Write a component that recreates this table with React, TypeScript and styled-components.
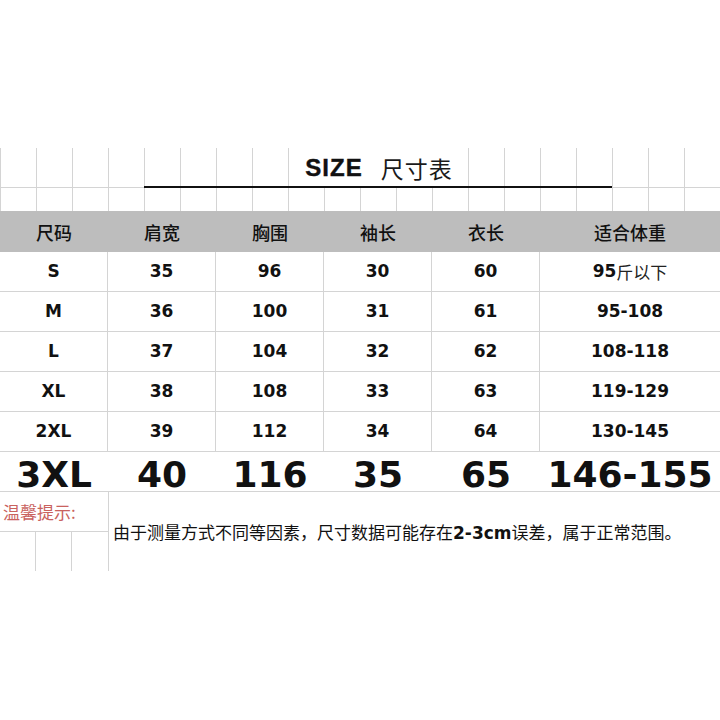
import React from "react";
import styled, { createGlobalStyle } from "styled-components";

const GlobalStyle = createGlobalStyle`
  html, body {
    margin: 0;
    padding: 0;
    background: #ffffff;
  }
  body {
    font-family: "Noto Sans CJK SC", "DejaVu Sans", sans-serif;
  }
`;

const LINE = "#d4d4d4";

const Page = styled.div`
  width: 720px;
  height: 720px;
  overflow: hidden;
  background: #fff;
  padding-top: 148px;
  box-sizing: border-box;
`;

const GridArea = styled.div`
  background-image: linear-gradient(to right, ${LINE} 1px, transparent 1px);
  background-size: 36px 100%;
  background-position: 0 0;
`;

const TitleRow = styled.div`
  display: grid;
  grid-template-columns: repeat(20, 36px);
  height: 40px;
  border-bottom: 1px solid ${LINE};
  box-sizing: border-box;
`;

const TitlePatch = styled.div`
  grid-column: 9 / 14;
  margin-left: 2px;
  background: #fff;
  display: flex;
  align-items: center;
  justify-content: center;
  gap: 18px;
  padding-left: 0;
`;

const SizeWord = styled.span`
  font-family: "Liberation Sans", Arial, sans-serif;
  font-weight: 700;
  font-size: 24px;
  letter-spacing: 1px;
  color: #111;
  -webkit-text-stroke: 0.4px #111;
`;

const TitleCn = styled.span`
  font-family: "Noto Sans CJK SC", sans-serif;
  font-size: 23px;
  font-weight: 400;
  color: #1a1a1a;
  letter-spacing: 1px;
`;

const SubRow = styled.div`
  display: grid;
  grid-template-columns: repeat(20, 36px);
  height: 23px;
`;

const Underline = styled.div`
  grid-column: 5 / 18;
  height: 2px;
  margin-top: -2px;
  background: #111;
`;

const Table = styled.div`
  display: flex;
  flex-direction: column;
`;

const Row = styled.div<{ $head?: boolean; $big?: boolean }>`
  display: grid;
  grid-template-columns: repeat(5, 108px) 1fr;
  height: ${(p) => (p.$head ? 41 : 40)}px;
  background: ${(p) => (p.$head ? "#bdbdbd" : "#fff")};
  border-bottom: ${(p) => (p.$head ? "none" : `1px solid ${LINE}`)};
  box-sizing: border-box;
`;

const Cell = styled.div<{ $head?: boolean; $big?: boolean; $last?: boolean }>`
  display: flex;
  align-items: center;
  justify-content: center;
  border-right: ${(p) =>
    p.$head || p.$big || p.$last ? "none" : `1px solid ${LINE}`};
  color: #111;
  font-family: ${(p) =>
    p.$head
      ? `"Noto Sans CJK SC", sans-serif`
      : `"DejaVu Sans", Verdana, sans-serif`};
  font-weight: ${(p) => (p.$head ? 500 : 700)};
  font-size: ${(p) => (p.$head ? 18 : p.$big ? 36 : 17)}px;
  line-height: 1;
  padding-top: ${(p) => (p.$big ? 5 : 0)}px;
  white-space: nowrap;
`;

const Unit = styled.span`
  font-family: "Noto Sans CJK SC", sans-serif;
  font-weight: 400;
  font-size: 17px;
  color: #222;
`;

const TipArea = styled.div`
  display: flex;
`;

const TipLeft = styled.div`
  width: 108px;
  border-right: 1px solid ${LINE};
  display: flex;
  flex-direction: column;
`;

const TipLabel = styled.div`
  height: 39px;
  border-bottom: 1px solid ${LINE};
  display: flex;
  align-items: center;
  padding-left: 3px;
  font-family: "Noto Sans CJK SC", sans-serif;
  font-size: 17px;
  color: #c9625e;
`;

const TipCells = styled.div`
  display: grid;
  grid-template-columns: repeat(3, 36px);
  height: 39px;
`;

const TipCell = styled.div<{ $last?: boolean }>`
  border-right: ${(p) => (p.$last ? "none" : `1px solid ${LINE}`)};
`;

const Note = styled.div`
  padding: 29px 0 0 4px;
  font-family: "Noto Sans CJK SC", sans-serif;
  font-size: 17px;
  color: #111;
  white-space: nowrap;
  line-height: 22px;
`;

const NoteBold = styled.b`
  font-family: "DejaVu Sans", Verdana, sans-serif;
  font-weight: 700;
`;

const heads = ["尺码", "肩宽", "胸围", "袖长", "衣长", "适合体重"];

const rows: string[][] = [
  ["S", "35", "96", "30", "60", "95"],
  ["M", "36", "100", "31", "61", "95-108"],
  ["L", "37", "104", "32", "62", "108-118"],
  ["XL", "38", "108", "33", "63", "119-129"],
  ["2XL", "39", "112", "34", "64", "130-145"],
];

const bigRow = ["3XL", "40", "116", "35", "65", "146-155"];

const App: React.FC = () => {
  return (
    <React.Fragment>
      <GlobalStyle />
      <Page>
        <GridArea>
          <TitleRow>
            <TitlePatch>
              <SizeWord>SIZE</SizeWord>
              <TitleCn>尺寸表</TitleCn>
            </TitlePatch>
          </TitleRow>
          <SubRow>
            <Underline />
          </SubRow>
        </GridArea>
        <Table>
          <Row $head>
            {heads.map((h) => (
              <Cell key={h} $head>
                {h}
              </Cell>
            ))}
          </Row>
          {rows.map((r, i) => (
            <Row key={r[0]}>
              {r.map((v, j) => (
                <Cell key={j} $last={j === 5}>
                  {v}
                  {i === 0 && j === 5 && <Unit>斤以下</Unit>}
                </Cell>
              ))}
            </Row>
          ))}
          <Row $big>
            {bigRow.map((v, j) => (
              <Cell key={j} $big>
                {v}
              </Cell>
            ))}
          </Row>
        </Table>
        <TipArea>
          <TipLeft>
            <TipLabel>温馨提示:</TipLabel>
            <TipCells>
              <TipCell />
              <TipCell />
              <TipCell $last />
            </TipCells>
          </TipLeft>
          <Note>
            由于测量方式不同等因素，尺寸数据可能存在<NoteBold>2-3cm</NoteBold>
            误差，属于正常范围。
          </Note>
        </TipArea>
      </Page>
    </React.Fragment>
  );
};

export default App;
